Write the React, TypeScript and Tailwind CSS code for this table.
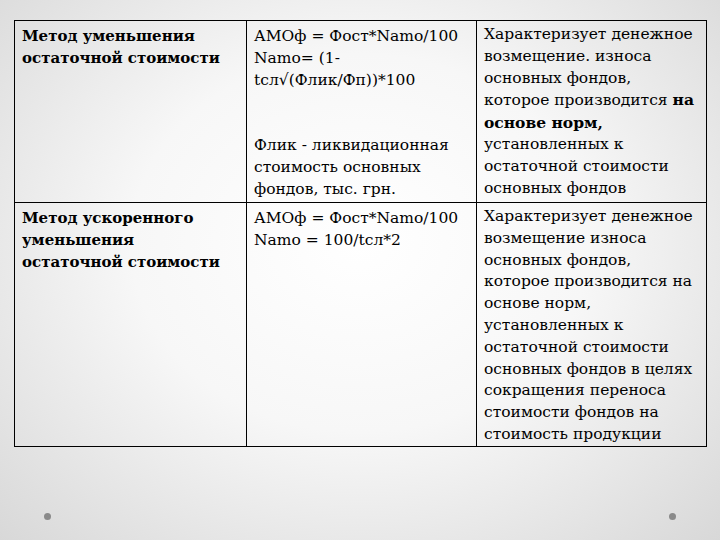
import React from "react";

type Row = {
  method: string[];
  formula: React.ReactNode;
  desc: React.ReactNode;
  height: string;
};

const rows: Row[] = [
  {
    method: ["Метод уменьшения", "остаточной стоимости"],
    formula: (
      <>
        <div>АМОф = Фост*Namo/100</div>
        <div>Namo= (1-</div>
        <div>tсл√(Флик/Фп))*100</div>
        <div className="h-[44px]" />
        <div>Флик - ликвидационная</div>
        <div>стоимость основных</div>
        <div>фондов, тыс. грн.</div>
      </>
    ),
    desc: (
      <>
        <div>Характеризует денежное</div>
        <div>возмещение. износа</div>
        <div>основных фондов,</div>
        <div>
          которое производится <span className="font-bold">на</span>
        </div>
        <div className="font-bold">основе норм,</div>
        <div>установленных к</div>
        <div>остаточной стоимости</div>
        <div>основных фондов</div>
      </>
    ),
    height: "h-[182px]",
  },
  {
    method: ["Метод ускоренного", "уменьшения", "остаточной стоимости"],
    formula: (
      <>
        <div>АМОф = Фост*Namo/100</div>
        <div>Namo = 100/tсл*2</div>
      </>
    ),
    desc: (
      <>
        <div>Характеризует денежное</div>
        <div>возмещение износа</div>
        <div>основных фондов,</div>
        <div>которое производится на</div>
        <div>основе норм,</div>
        <div>установленных к</div>
        <div>остаточной стоимости</div>
        <div>основных фондов в целях</div>
        <div>сокращения переноса</div>
        <div>стоимости фондов на</div>
        <div>стоимость продукции</div>
      </>
    ),
    height: "h-[243px]",
  },
];

export default function App() {
  return (
    <div className="relative h-[540px] w-[720px] overflow-hidden bg-[radial-gradient(ellipse_at_50%_45%,#ffffff_0%,#f7f7f7_45%,#d8d8d8_100%)] [font-family:'DejaVu_Serif',serif] text-[15.5px] leading-[21.8px] text-black">
      <div className="pl-[14px] pt-[20px]">
        <table className="w-[692px] table-fixed border-collapse">
          <colgroup>
            <col className="w-[232px]" />
            <col className="w-[230px]" />
            <col className="w-[230px]" />
          </colgroup>
          <tbody>
            {rows.map((row, i) => (
              <tr key={i} className={row.height}>
                <td className="border-[1.5px] border-black px-[7px] pt-[5px] align-top whitespace-nowrap text-[15px] font-bold">
                  {row.method.map((l) => (
                    <div key={l}>{l}</div>
                  ))}
                </td>
                <td className="border-[1.5px] border-black px-[7px] pt-[5px] align-top whitespace-nowrap">
                  {row.formula}
                </td>
                <td className="border-[1.5px] border-black px-[7px] pt-[3px] align-top whitespace-nowrap">
                  {row.desc}
                </td>
              </tr>
            ))}
          </tbody>
        </table>
      </div>
      <div className="flex justify-between px-[44px] pt-[66px]">
        <span className="h-[7px] w-[7px] rounded-full bg-[#8a8a8a]" />
        <span className="h-[7px] w-[7px] rounded-full bg-[#8a8a8a]" />
      </div>
    </div>
  );
}
